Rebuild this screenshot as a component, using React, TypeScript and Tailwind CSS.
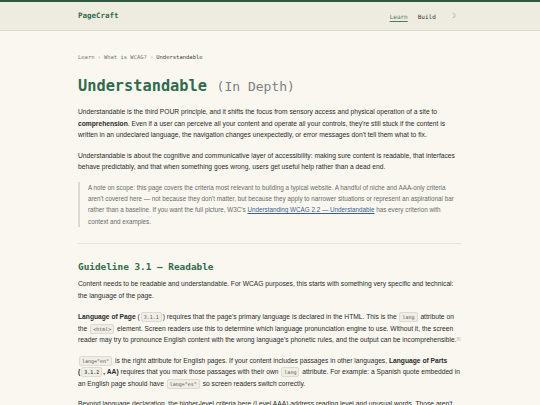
import React from "react";

const mono = "font-['DejaVu_Sans_Mono','Liberation_Mono',monospace]";

function Code({ children }: { children: React.ReactNode }) {
  return (
    <code
      className={`${mono} text-[5px] leading-none text-[#555] bg-[#f0ede4] border border-[#dedad0] rounded-[2px] px-[2px] py-[1px] mx-[1px]`}
    >
      {children}
    </code>
  );
}

export default function App() {
  return (
    <div className="min-h-[405px] bg-[#f9f7f0] text-[#2a2a2a] font-['Liberation_Sans',Arial,sans-serif] border-t-2 border-[#2d5a3d]">
      <header className="h-[29px] bg-[#eeebe0] border-b border-[#dedbd0]">
        <div className="max-w-[384px] mx-auto h-full flex items-center justify-between">
          <span className={`${mono} font-bold text-[7.5px] text-[#2f6b4c]`}>PageCraft</span>
          <nav className={`${mono} flex items-center gap-[10px] text-[6px] mr-[6px]`}>
            <a className="text-[#4d7a60] underline underline-offset-2">Learn</a>
            <a className="text-[#333]">Build</a>
            <span className="ml-[6px] text-[#999] text-[7px]">☽</span>
          </nav>
        </div>
      </header>

      <main className="max-w-[384px] mx-auto pt-[22px]">
        <div className={`${mono} text-[5.5px] text-[#777] flex items-center gap-[3px]`}>
          <span>Learn</span>
          <span className="text-[#aaa]">›</span>
          <span>What is WCAG?</span>
          <span className="text-[#aaa]">›</span>
          <span className="text-[#444]">Understandable</span>
        </div>

        <h1 className={`${mono} mt-[15px] leading-[20px]`}>
          <span className="text-[15.3px] font-bold text-[#2f6b4c]">Understandable</span>{" "}
          <span className="text-[13px] text-[#808080]">(In Depth)</span>
        </h1>

        <p className="mt-[9px] text-[6.7px] leading-[11.5px]">
          Understandable is the third POUR principle, and it shifts the focus from sensory access and physical operation of a site to{" "}
          <strong>comprehension</strong>. Even if a user can perceive all your content and operate all your controls, they're still stuck if the content is written in an undeclared language, the navigation changes unexpectedly, or error messages don't tell them what to fix.
        </p>

        <p className="mt-[9px] text-[6.7px] leading-[11.5px]">
          Understandable is about the cognitive and communicative layer of accessibility: making sure content is readable, that interfaces behave predictably, and that when something goes wrong, users get useful help rather than a dead end.
        </p>

        <blockquote className="mt-[9px] border-l-2 border-[#dcd9ce] pl-[8px] text-[6.3px] leading-[11.3px] text-[#6b6b6b]">
          A note on scope: this page covers the criteria most relevant to building a typical website. A handful of niche and AAA-only criteria aren't covered here — not because they don't matter, but because they apply to narrower situations or represent an aspirational bar rather than a baseline. If you want the full picture, W3C's{" "}
          <a className="text-[#3a5f8a] underline">Understanding WCAG 2.2 — Understandable</a> has every criterion with context and examples.
        </blockquote>

        <hr className="mt-[16px] border-0 border-t border-[#e6e3d9]" />

        <h2 className={`${mono} mt-[16px] text-[9.4px] font-bold text-[#2f6b4c]`}>Guideline 3.1 — Readable</h2>

        <p className="mt-[4px] text-[6.7px] leading-[11.5px]">
          Content needs to be readable and understandable. For WCAG purposes, this starts with something very specific and technical: the language of the page.
        </p>

        <p className="mt-[10px] text-[6.7px] leading-[11.5px]">
          <strong>Language of Page</strong> (<Code>3.1.1</Code>) requires that the page's primary language is declared in the HTML. This is the <Code>lang</Code> attribute on the <Code>&lt;html&gt;</Code> element. Screen readers use this to determine which language pronunciation engine to use. Without it, the screen reader may try to pronounce English content with the wrong language's phonetic rules, and the output can be{" "}
          <span className="whitespace-nowrap">
            incomprehensible.<sup className="text-[3.5px] text-[#c08a5a]">[1]</sup>
          </span>
        </p>

        <p className="mt-[9px] text-[6.7px] leading-[11.5px]">
          <Code>lang="en"</Code> is the right attribute for English pages. If your content includes passages in other languages, <strong>Language of Parts</strong>{" "}
          <strong>(<Code>3.1.2</Code>, AA)</strong> requires that you mark those passages with their own <Code>lang</Code> attribute. For example: a Spanish quote embedded in an English page should have <Code>lang="es"</Code> so screen readers switch correctly.
        </p>

        <p className="mt-[9px] text-[6.7px] leading-[11.5px]">
          Beyond language declaration, the higher-level criteria here (Level AAA) address reading level and unusual words. Those aren't AA requirements, but they're worth knowing about.
        </p>
      </main>
    </div>
  );
}
